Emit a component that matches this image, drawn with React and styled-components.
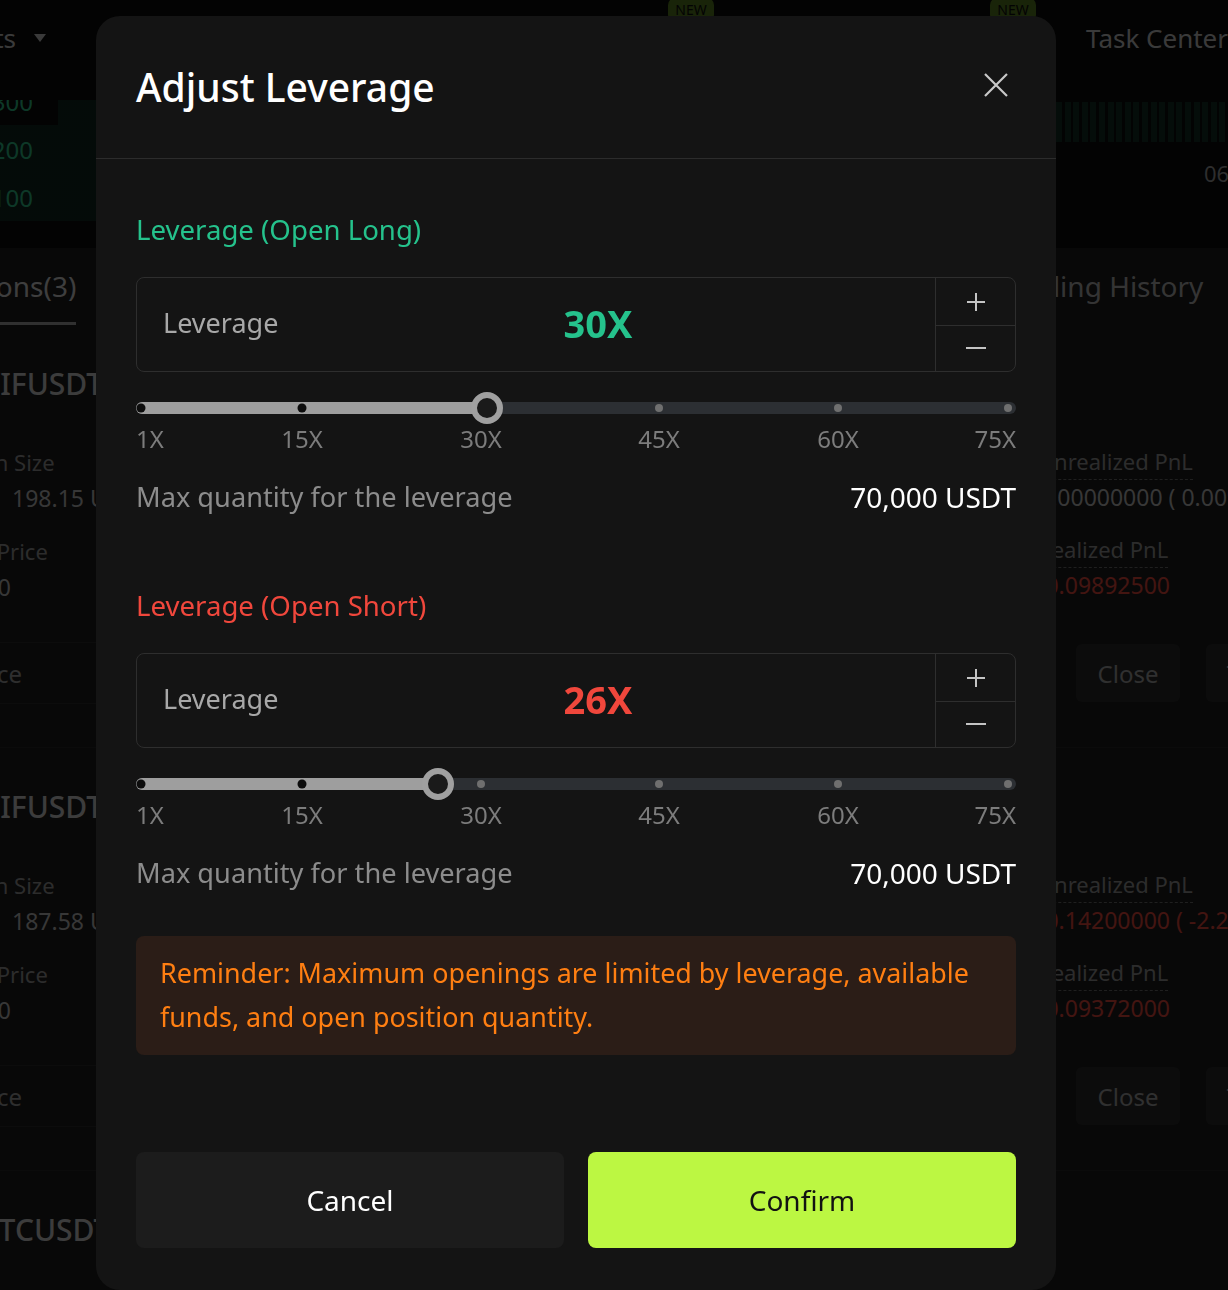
import React from 'react';
import styled, { createGlobalStyle } from 'styled-components';

const GlobalStyle = createGlobalStyle`
  html, body {
    margin: 0;
    padding: 0;
    background: #0a0a0a;
  }
  body {
    font-family: "Noto Sans", "Open Sans", sans-serif;
    overflow: hidden;
  }
  * {
    box-sizing: border-box;
  }
`;

const GREEN = '#25c28c';
const RED = '#f0473c';

/* ---------- trading page behind the dialog ---------- */

const Page = styled.div`
  width: 1228px;
  height: 1290px;
  overflow: hidden;
  background: #0a0a0a;
  display: flex;
  flex-direction: column;
`;

const TopNav = styled.nav`
  height: 76px;
  flex-shrink: 0;
  display: flex;
  align-items: center;
  margin-left: -62px;
`;

const NavItem = styled.div`
  position: relative;
  flex-shrink: 0;
  width: ${p => (p.$w ? `${p.$w}px` : 'auto')};
  margin-left: ${p => p.$ml || 0}px;
  display: flex;
  align-items: center;
  justify-content: ${p => (p.$end ? 'flex-end' : 'flex-start')};
  gap: 18px;
  font-size: 26px;
  line-height: 36px;
  color: #c4c4c4;
  white-space: nowrap;
`;

const NewBadge = styled.span`
  position: absolute;
  top: -22px;
  right: 0;
  height: 24px;
  width: 46px;
  border-radius: 7px;
  background: #55781f;
  color: #0c0c0c;
  font-size: 14px;
  line-height: 24px;
  text-align: center;
`;

const MarketRow = styled.div`
  height: 172px;
  flex-shrink: 0;
  display: grid;
  grid-template-columns: 96px 1fr 172px;
`;

const OrderBook = styled.div`
  margin-top: 24px;
  height: 121px;
  overflow: hidden;
`;

const BookRows = styled.div`
  margin-top: -23px;
`;

const BookRow = styled.div`
  height: 48px;
  display: flex;
  align-items: center;
  font-size: 24px;
  color: #2ebd85;
  background: linear-gradient(to left, rgba(46, 189, 133, 0.16) ${p => p.$depth}%, transparent ${p => p.$depth}%);
`;

const BookPrice = styled.span`
  width: 100px;
  margin-left: -67px;
  text-align: right;
`;

const ChartEdge = styled.div`
  display: flex;
  flex-direction: column;
`;

const VolumeStripes = styled.div`
  margin-top: 26px;
  height: 40px;
  background: repeating-linear-gradient(90deg, rgba(46, 189, 133, 0.2) 0 6px, transparent 6px 8.6px);
`;

const TimeLabel = styled.div`
  margin-top: 16px;
  padding-left: 148px;
  font-size: 22px;
  line-height: 30px;
  color: #9a9a9a;
  white-space: nowrap;
`;

const Panel = styled.div`
  flex: 1;
  background: #1b1b1b;
`;

const TabBar = styled.div`
  height: 77px;
  display: grid;
  grid-template-columns: 1078px 1fr;
  margin-left: -76px;
`;

const Tab = styled.div`
  justify-self: start;
  height: 77px;
  padding-top: 18px;
  font-size: 28px;
  line-height: 40px;
  color: ${p => (p.$active ? '#cfcfcf' : '#b0b0b0')};
  border-bottom: 3px solid ${p => (p.$active ? '#a0a0a0' : 'transparent')};
  white-space: nowrap;
`;

const Card = styled.div`
  display: grid;
  grid-template-columns: 1113px 1fr;
  margin-left: -75px;
  padding: 39px 0 43px;
  border-bottom: 1px solid #262626;
`;

const Column = styled.div`
  display: flex;
  flex-direction: column;
  gap: 17px;
  padding-top: ${p => p.$offset || 0}px;
  white-space: nowrap;
`;

const Symbol = styled.div`
  height: 40px;
  margin-left: ${p => p.$shift}px;
  margin-bottom: 23px;
  font-size: 30px;
  line-height: 40px;
  font-weight: 500;
  color: #c8c8c8;
`;

const Stat = styled.div`
  display: flex;
  flex-direction: column;
  align-items: flex-start;
`;

const StatLabel = styled.span`
  margin-left: ${p => p.$indent || 0}px;
  font-size: 22px;
  color: #959595;
  border-bottom: 1px dashed ${p => (p.$dashed ? '#6a6a6a' : 'transparent')};
  line-height: ${p => (p.$dashed ? '35px' : '36px')};
`;

const StatValue = styled.span`
  margin-left: ${p => p.$indent || 0}px;
  font-size: 23px;
  line-height: 35px;
  color: ${p => (p.$loss ? '#e0463b' : '#b8b8b8')};
`;

const FooterLeft = styled.div`
  margin-top: 37px;
  height: 62px;
  display: flex;
  align-items: center;
  border-top: 1px solid #2a2a2a;
  border-bottom: 1px solid #2a2a2a;
  font-size: 24px;
  color: #9c9c9c;
  white-space: nowrap;
`;

const FooterText = styled.span`
  margin-left: -45px;
`;

const FooterRight = styled.div`
  margin-top: 39px;
  display: flex;
  gap: 26px;
  padding-left: 38px;
`;

const GhostButton = styled.div`
  width: 104px;
  height: 58px;
  flex-shrink: 0;
  border-radius: 6px;
  background: #2a2a2a;
  color: #a0a0a0;
  font-size: 24px;
  display: flex;
  align-items: center;
  justify-content: center;
`;

const positions = [
  {
    symbol: 'WIFUSDT',
    shift: 47,
    size: '198.15 USDT',
    entry: '2.1510',
    upnl: '0.00000000 ( 0.00%)',
    upnlLoss: false,
    rpnl: '-0.09892500',
  },
  {
    symbol: 'WIFUSDT',
    shift: 47,
    size: '187.58 USDT',
    entry: '2.0380',
    upnl: '-0.14200000 ( -2.25%)',
    upnlLoss: true,
    rpnl: '-0.09372000',
  },
  {
    symbol: 'BTCUSDT',
    shift: 54,
    size: '120.40 USDT',
    entry: '64120',
    upnl: '0.00000000 ( 0.00%)',
    upnlLoss: false,
    rpnl: '-0.05120000',
  },
];

function Caret() {
  return (
    <svg width="12" height="8" viewBox="0 0 12 8">
      <path d="M0 0 L12 0 L6 8 Z" fill="#c4c4c4" />
    </svg>
  );
}

function TradingPage() {
  return (
    <Page>
      <TopNav>
        <NavItem $w={110}>
          Assets <Caret />
        </NavItem>
        <NavItem $w={666} $end>
          Copy Trading
          <NewBadge>NEW</NewBadge>
        </NavItem>
        <NavItem $w={322} $end>
          Rewards
          <NewBadge>NEW</NewBadge>
        </NavItem>
        <NavItem $ml={50}>Task Center</NavItem>
      </TopNav>

      <MarketRow>
        <OrderBook>
          <BookRows>
            <BookRow $depth={40}><BookPrice>2.1300</BookPrice></BookRow>
            <BookRow $depth={100}><BookPrice>2.1200</BookPrice></BookRow>
            <BookRow $depth={100}><BookPrice>2.1100</BookPrice></BookRow>
          </BookRows>
        </OrderBook>
        <div />
        <ChartEdge>
          <VolumeStripes />
          <TimeLabel>06:00</TimeLabel>
        </ChartEdge>
      </MarketRow>

      <Panel>
        <TabBar>
          <Tab $active>Positions(3)</Tab>
          <Tab>Trading History</Tab>
        </TabBar>

        {positions.map((p, i) => (
          <Card key={i}>
            <Column>
              <Symbol $shift={p.shift}>{p.symbol}</Symbol>
              <Stat>
                <StatLabel>Position Size</StatLabel>
                <StatValue $indent={87}>{p.size}</StatValue>
              </Stat>
              <Stat>
                <StatLabel $indent={12}>Entry Price</StatLabel>
                <StatValue $indent={14}>{p.entry}</StatValue>
              </Stat>
            </Column>
            <Column $offset={80}>
              <Stat>
                <StatLabel $dashed>Unrealized PnL</StatLabel>
                <StatValue $loss={p.upnlLoss}>{p.upnl}</StatValue>
              </Stat>
              <Stat>
                <StatLabel $dashed>Realized PnL</StatLabel>
                <StatValue $loss>{p.rpnl}</StatValue>
              </Stat>
            </Column>
            <FooterLeft>
              <FooterText>Market Price</FooterText>
            </FooterLeft>
            <FooterRight>
              <GhostButton>Close</GhostButton>
              <GhostButton>TP/SL</GhostButton>
            </FooterRight>
          </Card>
        ))}
      </Panel>
    </Page>
  );
}

/* ---------- leverage dialog ---------- */

const Backdrop = styled.div`
  position: fixed;
  inset: 0;
  background: rgba(0, 0, 0, 0.7);
  padding: 16px 0 0 96px;
`;

const Dialog = styled.div`
  width: 960px;
  height: 1274px;
  background: #141414;
  border-radius: 24px;
  display: flex;
  flex-direction: column;
`;

const Header = styled.div`
  height: 143px;
  flex-shrink: 0;
  display: flex;
  align-items: center;
  justify-content: space-between;
  padding: 0 48px 0 40px;
  border-bottom: 1px solid #2c2c2c;
`;

const Title = styled.h2`
  margin: 0;
  font-size: 39px;
  font-weight: 500;
  color: #ffffff;
  line-height: 50px;
`;

const CloseButton = styled.button`
  width: 24px;
  height: 24px;
  margin-bottom: 5px;
  padding: 0;
  border: none;
  background: none;
  display: flex;
  cursor: pointer;
`;

const Body = styled.div`
  padding: 0 40px 42px;
  display: flex;
  flex-direction: column;
`;

const SectionTitle = styled.div`
  margin-top: ${p => p.$top}px;
  font-size: 27.6px;
  line-height: 40px;
  color: ${p => p.$color};
`;

const InputBox = styled.div`
  margin-top: 28px;
  height: 95px;
  border: 1px solid #2e2e2e;
  border-radius: 8px;
  display: grid;
  grid-template-columns: 124px 1fr 80px;
  align-items: center;
`;

const InputLabel = styled.span`
  margin-top: -5px;
  padding-left: 26px;
  font-size: 27px;
  color: #a8a8a8;
  white-space: nowrap;
`;

const InputValue = styled.span`
  margin-top: -4px;
  text-align: center;
  font-size: 38px;
  font-weight: 700;
  color: ${p => p.$color};
`;

const Stepper = styled.div`
  align-self: stretch;
  display: grid;
  grid-template-rows: 1fr 1fr;
  border-left: 1px solid #2e2e2e;
`;

const StepButton = styled.button`
  border: none;
  background: none;
  padding: 0;
  display: flex;
  align-items: center;
  justify-content: center;
  border-top: 1px solid ${p => (p.$divided ? '#2e2e2e' : 'transparent')};
  cursor: pointer;
`;

const SliderArea = styled.div`
  position: relative;
  margin-top: 24px;
  height: 24px;
`;

const Track = styled.div`
  position: absolute;
  left: 0;
  right: 0;
  top: 6px;
  height: 12px;
  border-radius: 6px;
  background: #2c2f33;
`;

const TrackFill = styled.div`
  position: absolute;
  left: 0;
  top: 0;
  bottom: 0;
  border-radius: 6px;
  background: #9e9e9e;
`;

const Dot = styled.span`
  position: absolute;
  top: 12px;
  width: ${p => (p.$on ? 9 : 8)}px;
  height: ${p => (p.$on ? 9 : 8)}px;
  border-radius: 50%;
  transform: translate(-50%, -50%);
  background: ${p => (p.$on ? '#0c0c0c' : '#6f6f6f')};
`;

const Thumb = styled.span`
  position: absolute;
  top: 12px;
  width: 32px;
  height: 32px;
  border-radius: 50%;
  transform: translate(-50%, -50%);
  border: 6px solid #a0a0a0;
  background: #1a1a1a;
`;

const Ticks = styled.div`
  position: relative;
  margin-top: 4px;
  height: 30px;
`;

const TickLabel = styled.span`
  position: absolute;
  top: 0;
  font-size: 24px;
  line-height: 30px;
  color: #7c7c7c;
  white-space: nowrap;
  transform: translateX(${p => (p.$edge === 'start' ? '0' : p.$edge === 'end' ? '-100%' : '-50%')});
`;

const InfoRow = styled.div`
  margin-top: 23px;
  height: 40px;
  display: flex;
  justify-content: space-between;
  align-items: center;
  line-height: 40px;
`;

const InfoLabel = styled.span`
  font-size: 27.2px;
  color: #8c8c8c;
`;

const InfoValue = styled.span`
  font-size: 28px;
  color: #ffffff;
`;

const Reminder = styled.div`
  margin-top: 43px;
  padding: 15px 24px 16px;
  border-radius: 8px;
  background: #2b1d17;
  color: #ff7f12;
  font-size: 26.9px;
  line-height: 44px;
`;

const Actions = styled.div`
  margin-top: 97px;
  display: grid;
  grid-template-columns: 1fr 1fr;
  gap: 24px;
`;

const ActionButton = styled.button`
  height: 96px;
  border: none;
  border-radius: 8px;
  font-family: inherit;
  font-size: 28px;
  font-weight: 400;
  background: ${p => (p.$primary ? '#bcf742' : '#1c1c1c')};
  color: ${p => (p.$primary ? '#121212' : '#ffffff')};
  cursor: pointer;
`;

const TRACK = 880;
const marks = [
  { label: '1X', x: 5, edge: 'start' },
  { label: '15X', x: 166 },
  { label: '30X', x: 345 },
  { label: '45X', x: 523 },
  { label: '60X', x: 702 },
  { label: '75X', x: 872, edge: 'end' },
];

function PlusIcon() {
  return (
    <svg width="18" height="18" viewBox="0 0 18 18">
      <path d="M9 0 V18 M0 9 H18" stroke="#c4c4c4" strokeWidth="2" />
    </svg>
  );
}

function MinusIcon() {
  return (
    <svg width="20" height="18" viewBox="0 0 20 18">
      <path d="M0 9 H20" stroke="#c4c4c4" strokeWidth="2" />
    </svg>
  );
}

function LeverageSlider({ thumb }) {
  return (
    <>
      <SliderArea>
        <Track>
          <TrackFill style={{ width: thumb }} />
        </Track>
        {marks.map(m => (
          <Dot key={m.label} $on={m.x <= thumb} style={{ left: m.x }} />
        ))}
        <Thumb style={{ left: thumb }} />
      </SliderArea>
      <Ticks>
        {marks.map(m => (
          <TickLabel
            key={m.label}
            $edge={m.edge}
            style={{ left: m.edge === 'start' ? 0 : m.edge === 'end' ? TRACK : m.x }}
          >
            {m.label}
          </TickLabel>
        ))}
      </Ticks>
    </>
  );
}

function LeverageSection({ title, color, value, thumb, top }) {
  return (
    <>
      <SectionTitle $color={color} $top={top}>{title}</SectionTitle>
      <InputBox>
        <InputLabel>Leverage</InputLabel>
        <InputValue $color={color}>{value}</InputValue>
        <Stepper>
          <StepButton><PlusIcon /></StepButton>
          <StepButton $divided><MinusIcon /></StepButton>
        </Stepper>
      </InputBox>
      <LeverageSlider thumb={thumb} />
      <InfoRow>
        <InfoLabel>Max quantity for the leverage</InfoLabel>
        <InfoValue>70,000 USDT</InfoValue>
      </InfoRow>
    </>
  );
}

function AdjustLeverageDialog() {
  return (
    <Backdrop>
      <Dialog>
        <Header>
          <Title>Adjust Leverage</Title>
          <CloseButton aria-label="Close">
            <svg width="24" height="24" viewBox="0 0 24 24">
              <path d="M1 1 L23 23 M23 1 L1 23" stroke="#c8c8c8" strokeWidth="2.2" />
            </svg>
          </CloseButton>
        </Header>
        <Body>
          <LeverageSection title="Leverage (Open Long)" color={GREEN} value="30X" thumb={351} top={50} />
          <LeverageSection title="Leverage (Open Short)" color={RED} value="26X" thumb={302} top={68} />
          <Reminder>
            Reminder: Maximum openings are limited by leverage, available funds, and open position quantity.
          </Reminder>
          <Actions>
            <ActionButton>Cancel</ActionButton>
            <ActionButton $primary>Confirm</ActionButton>
          </Actions>
        </Body>
      </Dialog>
    </Backdrop>
  );
}

export default function App() {
  return (
    <>
      <GlobalStyle />
      <TradingPage />
      <AdjustLeverageDialog />
    </>
  );
}
